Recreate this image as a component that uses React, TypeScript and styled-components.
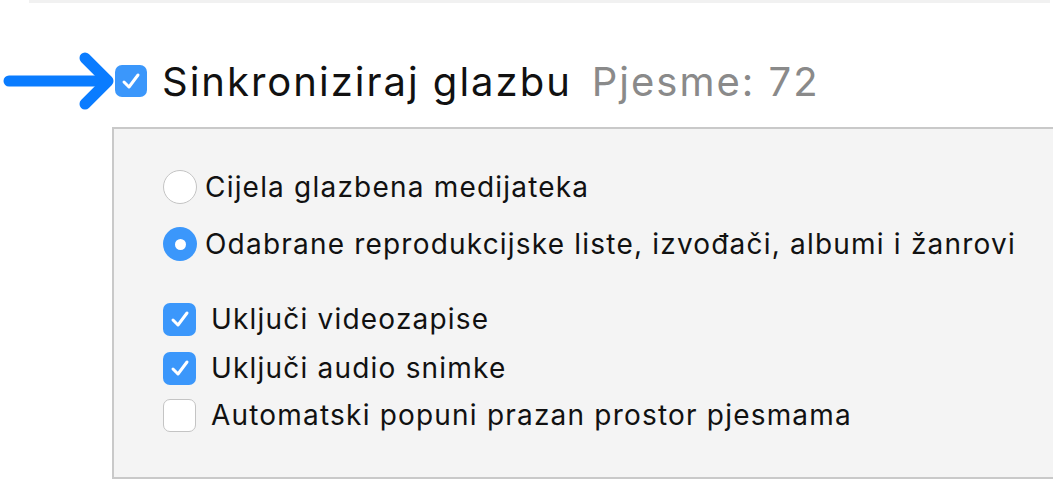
import React from "react";
import styled, { createGlobalStyle } from "styled-components";

const Global = createGlobalStyle`
  html, body { margin: 0; padding: 0; background: #ffffff; }
  body { font-family: Inter, "Noto Sans", "Liberation Sans", sans-serif; color: #111; }
`;

const Page = styled.div`
  width: 1053px;
  height: 500px;
  overflow: hidden;
  display: flex;
  flex-direction: column;
`;

const TopStrip = styled.div`
  margin-left: 29px;
  margin-right: 3px;
  height: 3px;
  background: #f1f1f1;
`;

const Header = styled.div`
  display: flex;
  align-items: center;
  height: 34px;
  margin-top: 61px;
  padding-left: 3px;
`;

const Title = styled.span`
  font-size: 40px;
  color: #111;
  margin-left: 15px;
  letter-spacing: 2px;
  white-space: nowrap;
`;

const Count = styled.span`
  font-size: 40px;
  color: #8a8a8a;
  margin-left: 20px;
  letter-spacing: 2px;
  white-space: nowrap;
`;

const Box = styled.span<{ $checked?: boolean; $size?: number }>`
  width: ${(p) => p.$size ?? 33}px;
  height: ${(p) => p.$size ?? 33}px;
  box-sizing: border-box;
  border-radius: 7px;
  flex: none;
  display: flex;
  align-items: center;
  justify-content: center;
  background: ${(p) => (p.$checked ? "#3b97fb" : "#ffffff")};
  border: ${(p) => (p.$checked ? "none" : "1.5px solid #c4c4c4")};
`;

const Radio = styled.span<{ $checked?: boolean }>`
  width: 34px;
  height: 34px;
  box-sizing: border-box;
  border-radius: 50%;
  flex: none;
  display: flex;
  align-items: center;
  justify-content: center;
  background: ${(p) => (p.$checked ? "#3b97fb" : "#ffffff")};
  border: ${(p) => (p.$checked ? "none" : "1.5px solid #c4c4c4")};
`;

const Dot = styled.span`
  width: 11px;
  height: 11px;
  border-radius: 50%;
  background: #fff;
`;

const Panel = styled.div`
  margin-top: 29px;
  margin-left: 112px;
  height: 352px;
  box-sizing: border-box;
  background: #f4f4f4;
  border: 2px solid #c9c9c9;
  border-right: none;
  padding: 41px 0 0 49px;
  display: flex;
  flex-direction: column;
`;

const Row = styled.div<{ $gap: number; $mt?: number }>`
  display: flex;
  align-items: center;
  gap: ${(p) => p.$gap}px;
  height: 34px;
  margin-top: ${(p) => p.$mt ?? 0}px;
  font-size: 28px;
  letter-spacing: 1.2px;
  color: #111;
  white-space: nowrap;
`;

const Check = () => (
  <svg width="20" height="18" viewBox="0 0 20 18">
    <path d="M3 10 L8 15 L17 3" fill="none" stroke="#fff" strokeWidth="3" strokeLinecap="round" strokeLinejoin="round" />
  </svg>
);

const Arrow = () => (
  <svg width="112" height="60" viewBox="0 0 112 60">
    <path d="M6 30 H104" stroke="#0a7cff" strokeWidth="11" strokeLinecap="round" />
    <path d="M82 7 L105 30 L82 53" fill="none" stroke="#0a7cff" strokeWidth="11" strokeLinecap="round" strokeLinejoin="round" />
  </svg>
);

export default function App() {
  return (
    <Page>
      <Global />
      <TopStrip />
      <Header>
        <Arrow />
        <Box $checked $size={32}>
          <Check />
        </Box>
        <Title>Sinkroniziraj glazbu</Title>
        <Count>Pjesme: 72</Count>
      </Header>
      <Panel>
        <Row $gap={8}>
          <Radio />
          <span>Cijela glazbena medijateka</span>
        </Row>
        <Row $gap={8} $mt={23}>
          <Radio $checked>
            <Dot />
          </Radio>
          <span>Odabrane reprodukcijske liste, izvođači, albumi i žanrovi</span>
        </Row>
        <Row $gap={15} $mt={41}>
          <Box $checked>
            <Check />
          </Box>
          <span>Uključi videozapise</span>
        </Row>
        <Row $gap={15} $mt={15}>
          <Box $checked>
            <Check />
          </Box>
          <span>Uključi audio snimke</span>
        </Row>
        <Row $gap={15} $mt={13}>
          <Box />
          <span>Automatski popuni prazan prostor pjesmama</span>
        </Row>
      </Panel>
    </Page>
  );
}
